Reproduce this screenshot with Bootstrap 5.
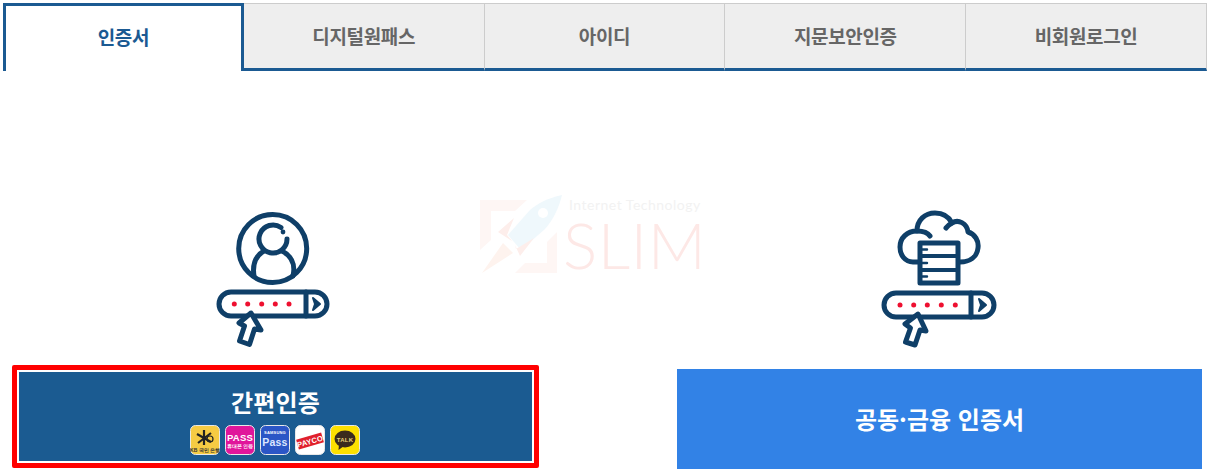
<!DOCTYPE html>
<html lang="ko">
<head>
  <meta charset="UTF-8">
  <meta name="viewport" content="width=device-width, initial-scale=1">
  <title>로그인</title>
  <link href="https://cdn.jsdelivr.net/npm/bootstrap@5.3.0/dist/css/bootstrap.min.css" rel="stylesheet">
  <style>
    body { background: #fff; font-family: "Noto Sans CJK KR", "Liberation Sans", sans-serif; overflow: hidden; }
    .login-wrap { position: relative; padding: 3px 5px 0 3px; height: 472px; }
    .login-tabs { height: 68px; flex-wrap: nowrap; }
    .login-tabs .nav-item { flex: 1 1 0; }
    .login-tabs .nav-link { height: 68px; line-height: 63px; padding: 0; font-size: 19px; font-weight: 700; letter-spacing: -.35px; color: #666; background: #eee; border-top: 1px solid #ccc; border-right: 1px solid #ccc; border-bottom: 3px solid #1b5a92; border-radius: 0; }
    .login-tabs .nav-link.active { color: #1b5a92; background: #fff; border: 3px solid #1b5a92; border-bottom: 0; line-height: 61px; }
    .auth-cols { margin: 0 0 0 9px; width: 1190px; }
    .auth-col { width: 527px; }
    .auth-col.second { width: 525px; }
    .auth-icon { display: block; width: 140px; height: 150px; margin: 129px auto 0; }
    .ic { fill: none; stroke: #0f3f68; stroke-width: 5; stroke-linecap: round; stroke-linejoin: round; }
    .dot { fill: #ee1030; }
    .easy-btn { display: flex; flex-direction: column; align-items: center; width: 100%; height: 103px; margin-top: 15px; padding: 14px 0 0; background: #1b5b91; border: 5px solid #f00; outline: 0; box-shadow: inset 0 0 0 2px #fff; border-radius: 2px; color: #fff; font-size: 24px; font-weight: 700; line-height: 36px; letter-spacing: .2px; }
    .cert-btn { display: block; width: 100%; height: 100px; margin-top: 19px; background: #3282e6; border: 0; border-radius: 0; color: #fff; font-size: 24px; font-weight: 700; letter-spacing: 0; }
    .pay-icons { display: flex; gap: 5px; margin: 5px 2px 0 0; }
    .pay-icons svg { display: block; width: 30px; height: 30px; }
    .pay-icons text { font-family: "Liberation Sans", sans-serif; font-weight: 700; text-anchor: middle; }
    .wm { position: absolute; left: 478px; top: 193px; width: 230px; height: 84px; pointer-events: none; }
    .wm-sub { position: absolute; left: 91px; top: 3px; font-family: Lato, sans-serif; font-size: 14px; line-height: 17px; letter-spacing: .5px; color: #f2f2f2; white-space: nowrap; }
    .wm-main { position: absolute; left: 85px; top: 21px; font-family: Lato, sans-serif; font-weight: 300; font-size: 64px; line-height: 62px; letter-spacing: .5px; color: #fde8e6; white-space: nowrap; }
  </style>
</head>
<body>
  <div class="login-wrap">
    <ul class="nav login-tabs text-center">
      <li class="nav-item"><a class="nav-link active" href="#">인증서</a></li>
      <li class="nav-item"><a class="nav-link" href="#">디지털원패스</a></li>
      <li class="nav-item"><a class="nav-link" href="#">아이디</a></li>
      <li class="nav-item"><a class="nav-link" href="#">지문보안인증</a></li>
      <li class="nav-item"><a class="nav-link" href="#">비회원로그인</a></li>
    </ul>

    <div class="d-flex justify-content-between auth-cols">
      <div class="auth-col">
        <svg class="auth-icon" viewBox="206 200 140 150">
          <circle class="ic" cx="272.7" cy="248.5" r="34"/>
          <path class="ic" d="M281 227.5A14 14 0 1 0 287 239"/>
          <circle cx="283" cy="232" r="2.4" fill="#0f3f68"/>
          <path class="ic" d="M254 276C252 263 257 255 264 251M282 251C290 255 296 263 293 276"/>
          <rect class="ic" x="219" y="292" width="108" height="24" rx="12"/>
          <path class="ic" d="M306 292V316"/>
          <path d="M313 298L320 304L313 310L315 304Z" fill="#0f3f68" stroke="#0f3f68" stroke-width="2" stroke-linejoin="round"/>
          <circle class="dot" cx="234.3" cy="304" r="2.5"/>
          <circle class="dot" cx="247.7" cy="304" r="2.5"/>
          <circle class="dot" cx="261.7" cy="304" r="2.5"/>
          <circle class="dot" cx="275.3" cy="304" r="2.5"/>
          <circle class="dot" cx="289" cy="304" r="2.5"/>
          <path class="ic" style="fill:#fff" d="M251 313L239 323L244.5 326L239.5 341L249.5 344.5L254.5 329L261 330Z"/>
        </svg>
        <button type="button" class="easy-btn">
          간편인증
          <span class="pay-icons">
            <svg viewBox="0 0 30 30"><rect x=".5" y=".5" width="29" height="29" rx="5" fill="#f6cb43" stroke="#e8e8e8"/><path d="M14 5V20M7 9L21 17M21 8L8 18" stroke="#222" stroke-width="2.2"/><circle cx="20" cy="14" r="3" fill="none" stroke="#222" stroke-width="1.2"/><text x="15" y="26.500" font-size="5" fill="#333">KB 국민은행</text></svg>
            <svg viewBox="0 0 30 30"><rect x=".5" y=".5" width="29" height="29" rx="5" fill="#e0169b" stroke="#e8e8e8"/><text x="15" y="16" font-size="9.500" fill="#fff">PASS</text><text x="15" y="23" font-size="4.500" fill="#fff">휴대폰인증</text></svg>
            <svg viewBox="0 0 30 30"><rect x=".5" y=".5" width="29" height="29" rx="5" fill="#2b56c6" stroke="#e8e8e8"/><text x="15" y="9" font-size="4" fill="#fff">SAMSUNG</text><text x="15" y="21" font-size="10.500" font-weight="400" fill="#dbe6ff">Pass</text></svg>
            <svg viewBox="0 0 30 30"><rect x=".5" y=".5" width="29" height="29" rx="5" fill="#fff" stroke="#e8e8e8"/><g transform="rotate(-16 15 16)"><rect x="2" y="11" width="26" height="10" fill="#e0202c"/><text x="15" y="19" font-size="7.500" fill="#fff">PAYCO</text></g></svg>
            <svg viewBox="0 0 30 30"><rect x=".5" y=".5" width="29" height="29" rx="5" fill="#fde000" stroke="#e8e8e8"/><ellipse cx="15" cy="14" rx="10.500" ry="8.500" fill="#3b2b1d"/><path d="M9 19L8.500 25L14 21Z" fill="#3b2b1d"/><text x="15" y="16.500" font-size="6" fill="#e8d27a">TALK</text></svg>
          </span>
        </button>
      </div>
      <div class="auth-col second">
        <svg class="auth-icon" viewBox="870 200 140 150">
          <path class="ic" d="M918 262H913C905 262 900 255 900 247C900 238 907 231 917 231C917 220 925 213 935 213C943 213 949 217 952 223C958 219 967 223 968 232C975 234 979 241 978 248C977 257 970 262 960 262"/>
          <path class="ic" d="M917 231C923 231 928 233 930 236M946 228C948 225 950 224 952 223"/>
          <rect class="ic" style="fill:#fff" x="920" y="243" width="38" height="40"/>
          <path class="ic" style="stroke-width:4" d="M920 256H958M920 270H958"/>
          <path class="ic" style="stroke-width:2.4" d="M922 249.500H927M922 263H927M922 276.500H927"/>
          <rect class="ic" x="884" y="293" width="110" height="24" rx="12"/>
          <path class="ic" d="M971 293V317"/>
          <path d="M979 299L986 305L979 311L981 305Z" fill="#0f3f68" stroke="#0f3f68" stroke-width="2" stroke-linejoin="round"/>
          <circle class="dot" cx="900" cy="305" r="2.5"/>
          <circle class="dot" cx="913.7" cy="305" r="2.5"/>
          <circle class="dot" cx="927.300" cy="305" r="2.5"/>
          <circle class="dot" cx="941.300" cy="305" r="2.5"/>
          <circle class="dot" cx="955.300" cy="305" r="2.5"/>
          <path class="ic" style="fill:#fff" d="M918 314L905 324L910.500 328L905.500 342L915 345L920 330L926 331Z"/>
        </svg>
        <button type="button" class="cert-btn">공동·금융 인증서</button>
      </div>
    </div>

    <div class="wm">
      <svg width="84" height="84" viewBox="478 193 84 84">
        <path d="M480 200H527L515 211H491V240L480 250Z" fill="#fef6f4"/>
        <path d="M557 232V273H515L525 263H547V242Z" fill="#fef6f4"/>
        <path d="M562 195C548 198 538 203 530 210L508 235L521 250L545 229C553 220 559 208 562 195Z" fill="#eff8fc"/>
        <circle cx="543" cy="213" r="5" fill="#fff"/>
        <path d="M498 232L514 218L507 235L512 241Z" fill="#fdeeeb"/>
        <path d="M520 256L534 238L516 249L515 245Z" fill="#fdeeeb"/>
        <path d="M503 243L482 273L513 253Z" fill="#fef3ee"/>
      </svg>
      <div class="wm-sub">Internet Technology</div>
      <div class="wm-main">SLIM</div>
    </div>
  </div>
  <script src="https://cdn.jsdelivr.net/npm/bootstrap@5.3.0/dist/js/bootstrap.bundle.min.js"></script>
</body>
</html>
